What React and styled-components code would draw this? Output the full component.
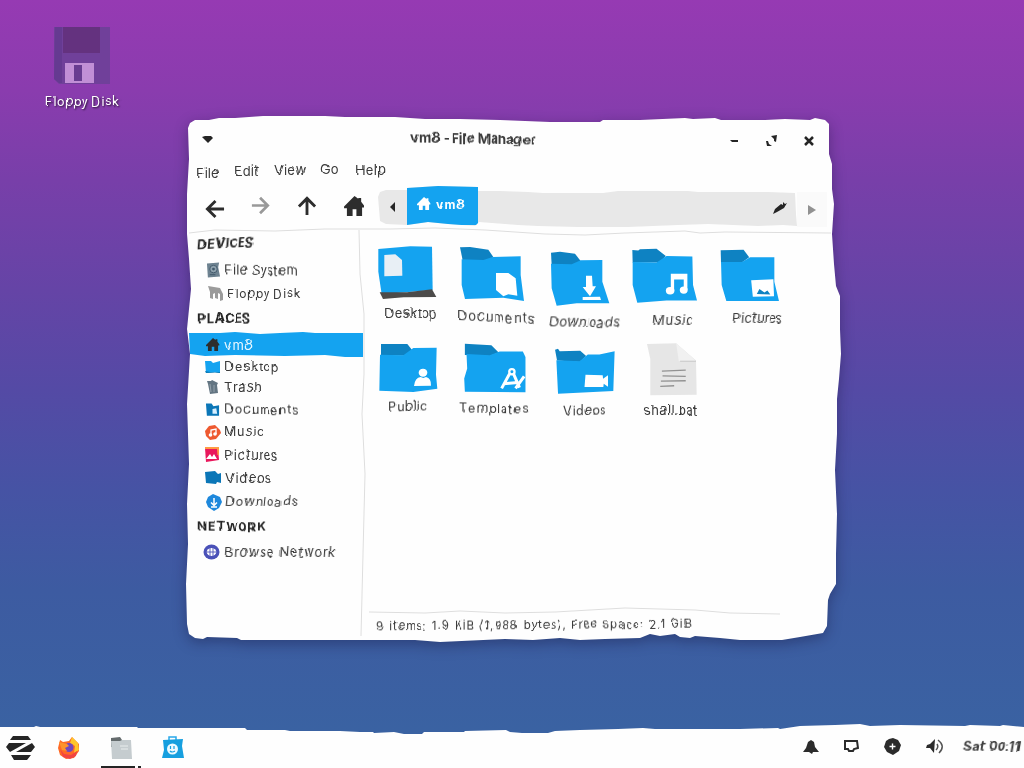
import React from 'react'
import styled, { createGlobalStyle } from 'styled-components'

const GlobalStyle = createGlobalStyle`
  * {
    box-sizing: border-box;
  }

  body {
    margin: 0;
    overflow: hidden;
    font-family: Inter, 'Open Sans', sans-serif;
    font-size: 13px;
    color: #3a3a3a;
  }

  svg {
    display: block;
    flex: none;
  }
`

const Screen = styled.div`
  position: relative;
  display: flex;
  flex-direction: column;
  justify-content: space-between;
  width: 1024px;
  height: 768px;
  overflow: hidden;
  background: linear-gradient(#963ab3 0, #8a3cae 90px, #783fa9 180px, #6544a6 290px, #544aa5 390px, #4653a4 490px, #3d5ba1 590px, #3a62a2 730px);
`

const DesktopIcon = styled.div`
  display: flex;
  flex-direction: column;
  align-items: center;
  width: 165px;
  padding-top: 26px;
  color: #fff;
  text-shadow: 1px 1px 2px rgba(0, 0, 0, 0.75);
`

// hand-cut text: every label has its own tracking and slope
const Ink = styled.span`
  display: inline-block;
  white-space: nowrap;
  line-height: 16px;
  font-size: ${p => p.$size || 13}px;
  font-weight: ${p => p.$weight || 400};
  letter-spacing: ${p => p.$track || 0}px;
  margin-top: ${p => p.$down || 0}px;
  margin-left: ${p => p.$left || 0}px;
  transform: skewY(${p => p.$slope || 0}deg) skewX(${p => p.$lean || 0}deg);
  filter: url(#rough);
`

const WindowShadow = styled.div`
  position: absolute;
  left: 185px;
  top: 114px;
  filter: drop-shadow(0 4px 7px rgba(15, 10, 50, 0.35));
`

const Window = styled.div`
  display: flex;
  flex-direction: column;
  width: 658px;
  height: 530px;
  background: #fefefe;
  clip-path: polygon(
    3px 14px, 5px 9px, 10px 6px, 24px 6px, 34px 4px, 50px 4px, 78px 2px, 140px 2px, 160px 3px, 210px 3px,
    240px 5px, 275px 5px, 315px 6px, 365px 8px, 415px 8px, 418px 6px, 455px 6px, 500px 4px, 508px 5px, 530px 4px,
    536px 6px, 580px 6px, 600px 5px, 625px 6px, 630px 4px, 640px 6px, 644px 10px, 644px 40px, 647px 50px, 647px 75px,
    649px 90px, 647px 120px, 649px 150px, 651px 172px, 655px 182px, 655px 215px, 656px 240px, 654px 265px, 652px 285px, 652px 320px,
    650px 356px, 651px 378px, 652px 400px, 651px 440px, 651px 470px, 645px 480px, 643px 486px, 642px 512px, 638px 519px, 615px 523px,
    597px 526px, 555px 526px, 535px 524px, 510px 522px, 505px 524px, 495px 523px, 490px 520px, 475px 522px, 465px 520px, 455px 524px,
    420px 525px, 395px 526px, 375px 524px, 348px 526px, 320px 525px, 255px 528px, 230px 526px, 56px 526px, 52px 524px, 22px 523px,
    18px 525px, 10px 524px, 4px 520px, 2px 510px, 1px 470px, 3px 430px, 2px 390px, 4px 350px, 2px 290px, 5px 240px,
    2px 215px, 6px 175px, 4px 145px, 2px 120px, 2px 80px, 4px 45px
  );
`

const TitleBar = styled.div`
  display: grid;
  grid-template-columns: 204px 1fr 112px;
  align-items: center;
  height: 48px;
  padding: 4px 17px 0 17px;
`

const Controls = styled.div`
  display: flex;
  justify-content: space-between;
  align-items: center;
  padding: 2px 12px 0 16px;
`

const MenuBar = styled.div`
  display: flex;
  align-items: flex-start;
  height: 22px;
  padding-left: 12px;
`

const MenuItem = styled(Ink)`
  width: ${p => p.$w}px;
`

const Toolbar = styled.div`
  display: flex;
  height: 46px;
  padding-left: 19px;
`

const ToolButton = styled.div`
  display: flex;
  justify-content: center;
  width: ${p => p.$w || 22}px;
  margin-right: ${p => p.$gap}px;
  padding-top: ${p => p.$down}px;
  color: ${p => (p.$off ? '#999' : '#2d2d2d')};
`

const PathBar = styled.div`
  display: flex;
  align-items: flex-start;
  justify-content: space-between;
  width: 419px;
  height: 43px;
  background: #e8e8e8;
  clip-path: polygon(
    0 13px, 2px 8px, 8px 6px, 29px 6px, 29px 4px, 60px 2px, 100px 3px, 100px 7px, 122px 7px, 150px 8px,
    165px 9px, 225px 9px, 240px 7px, 310px 7px, 320px 8px, 390px 8px, 417px 9px, 418px 30px, 419px 42px, 405px 41px,
    380px 42px, 330px 40px, 300px 41px, 250px 43px, 200px 43px, 160px 42px, 140px 41px, 101px 38px, 97px 42px, 70px 40px,
    50px 38px, 29px 41px, 8px 40px, 2px 37px
  );
`

const PathTab = styled.div`
  display: flex;
  gap: 6px;
  width: 71px;
  height: 41px;
  margin-right: auto;
  padding: 13px 0 0 10px;
  color: #fff;
  background: #14a3f0;
`

const PathArrow = styled.div`
  width: 29px;
  padding: 18px 0 0 11px;
`

const PathEdit = styled.div`
  padding: 18px 10px 0 0;
`

const PathNext = styled.div`
  width: 30px;
  height: 35px;
  margin-top: 8px;
  padding: 13px 0 0 11px;
  background: #fafafa;
`

const Body = styled.div`
  position: relative;
  display: grid;
  grid-template-columns: 176px 1fr;
  flex: 1;
`

const Seams = styled.svg`
  position: absolute;
  left: 0;
  top: -6px;
  pointer-events: none;
`

const Sidebar = styled.div`
  display: flex;
  flex-direction: column;
  padding-top: 2px;
`

const SideTitle = styled.div`
  display: flex;
  align-items: center;
  height: ${p => p.$h}px;
  padding-left: 13px;
  color: #252525;
`

const SideRow = styled.div`
  display: flex;
  align-items: center;
  gap: ${p => p.$gap || 5}px;
  height: ${p => p.$h}px;
  padding-left: ${p => p.$pad || 20}px;
  ${p => p.$active && `
    width: 178px;
    color: #e8f7ff;
    background: #14a3f0;
    clip-path: polygon(4px 1px, 35px 1px, 50px 0, 75px 2px, 95px 1px, 118px 0, 130px 1px, 178px 1px, 178px 25px, 160px 25px, 140px 23px, 100px 24px, 50px 23px, 20px 24px, 5px 22px);
  `}
`

const Main = styled.div`
  display: flex;
  flex-direction: column;
`

const Files = styled.div`
  display: grid;
  grid-template-columns: repeat(5, 87px);
  grid-template-rows: 98px 90px;
  flex: 1;
  padding: 14px 0 0 4px;
`

const Tile = styled.div`
  display: flex;
  flex-direction: column;
  align-items: flex-start;
  padding-top: ${p => p.$y}px;
  padding-left: ${p => p.$x}px;
`

const StatusBar = styled.div`
  height: 36px;
  padding: 8px 0 0 16px;
`

const Taskbar = styled.div`
  display: flex;
  align-items: center;
  justify-content: space-between;
  height: 46px;
  padding: 5px 3px 0 6px;
  background: #fefefe;
  clip-path: polygon(
    0 5px, 34px 5px, 36px 4px, 40px 5px, 137px 5px, 138px 6px, 245px 6px, 247px 8px, 285px 8px, 290px 9px,
    340px 9px, 360px 10px, 373px 10px, 374px 11px, 394px 10px, 404px 12px, 422px 12px, 424px 10px, 464px 10px, 465px 9px,
    506px 8px, 510px 10px, 522px 11px, 548px 11px, 555px 9px, 580px 8px, 618px 7px, 643px 6px, 655px 7px, 740px 7px,
    778px 6px, 780px 7px, 800px 4px, 835px 3px, 860px 2px, 870px 4px, 900px 3px, 965px 4px, 970px 3px, 1000px 4px,
    1003px 3px, 1024px 5px, 1024px 46px, 0 46px
  );
`

const Launchers = styled.div`
  display: flex;
  align-items: center;
  gap: 23px;
`

const Running = styled.div`
  display: flex;
  flex-direction: column;
  align-items: center;
  justify-content: space-between;
  width: 42px;
  height: 41px;
  padding-top: 10px;
  margin: 0 -3px;
`

const RunningMark = styled.div`
  display: flex;
  gap: 3px;

  &::before,
  &::after {
    content: '';
    width: 34px;
    height: 2px;
    background: #252525;
  }

  &::after {
    width: 3px;
  }
`

const Tray = styled.div`
  display: flex;
  align-items: center;
  gap: 25px;
  padding-bottom: 2px;
`

const BLUE = '#14a3f0'
const DARK = '#0e82c2'

const HouseIcon = ({ size = 22, color = 'currentColor' }) => (
  <svg width={size} height={size * 0.95} viewBox="0 0 22 21" fill={color}>
    <path d="M11 0 15 3V2h3v4l3 4v2h-2v9h-6v-7H9v7H3v-8H0v-2z" />
  </svg>
)

const ArrowIcon = ({ turn = 0, size = 21 }) => (
  <svg width={size} height={size} viewBox="0 0 21 21" fill="none" stroke="currentColor" strokeWidth="3">
    <g transform={`rotate(${turn} 10.5 10.5)`}>
      <path d="M20 10.5H3M11 2 2.5 10.5 11 19" />
    </g>
  </svg>
)

const sideIcons = {
  disk: <svg width="15" height="16" viewBox="0 0 16 16"><path d="M1 1 14 0 13 5 15 15 2 16z" fill="#6d8290" /><circle cx="8" cy="7" r="4" fill="#8fa2ae" stroke="#40586a" /><circle cx="8" cy="7" r="1.5" fill="#40586a" /><path d="M4 13h6" stroke="#40586a" /></svg>,
  floppy: <svg width="16" height="15" viewBox="0 0 16 15"><path d="M0 0 12 2 15 8 15 14 12 15 12 8 10 7 10 13 7 12 7 7 5 8 5 13 2 12 2 6z" fill="#9b9b9b" /></svg>,
  home: <HouseIcon size={14} color="#2d2d2d" />,
  desktop: <svg width="15" height="14" viewBox="0 0 15 14"><path d="M0 1 6 1 8 3 15 1V13L10 12 1 13z" fill={BLUE} /><path d="M0 11 5 12 15 12V13L10 12.5 1 13z" fill="#087ab7" /></svg>,
  trash: <svg width="13" height="14" viewBox="0 0 13 14"><path d="M1 1 5 1 6 0 12 3 11 5 12 13 4 14 2 4z" fill="#637582" /><path d="M4 4 5 12M8 5V12" stroke="#93a1ab" /></svg>,
  documents: <svg width="15" height="14" viewBox="0 0 16 14"><path d="M1 0H7L9 3 15 2V13H2z" fill="#0b76b7" /><path d="M8 6 12 5 13 11H8z" fill="#d7efff" /></svg>,
  music: <svg width="16" height="15" viewBox="0 0 16 15"><path d="M4 1 10 0 15 5 16 8 11 14 5 15 1 11 0 6z" fill="#ee5930" /><path d="M6 10V5l5-1v5" fill="none" stroke="#fff" strokeWidth="1.3" /><circle cx="5.5" cy="10" r="1.8" fill="#fff" /><circle cx="10" cy="9" r="1.8" fill="#fff" /></svg>,
  pictures: <svg width="16" height="15" viewBox="0 0 16 15"><path d="M1 1 14 0 15 13 2 15z" fill="#e9185c" /><path d="M1 0 15 0 15 8 13.5 8 13 2 1 2z" fill="#ff9b43" /><path d="M2 12 6 7 8 10 10 7 13 12z" fill="#fff" /></svg>,
  videos: <svg width="17" height="14" viewBox="0 0 17 14"><path d="M0 1 10 0 13 3 16 2 16 12 12 11 11 13 1 12z" fill="#0b76b7" /></svg>,
  downloads: <svg width="16" height="17" viewBox="0 0 16 17"><path d="M7 0 14 3 16 8 13 14 8 17 2 13 0 8 2 3z" fill="#1e88dc" /><path d="M8 4V11M5 8.5 8 11.5 11 8.5M5 13H11" fill="none" stroke="#fff" strokeWidth="1.5" /></svg>,
  network: <svg width="17" height="16" viewBox="0 0 17 16"><ellipse cx="8.5" cy="8" rx="8" ry="7.5" fill="#4a51b8" /><ellipse cx="8.5" cy="8" rx="4.8" ry="4" fill="#fff" /><path d="M7 4V12M10 4V12M3.5 8H13.5" stroke="#4a51b8" strokeWidth="0.9" /></svg>,
}

const devices = [
  { icon: 'disk', name: 'File System', h: 27, pad: 21, gap: 4, ink: { $track: 0.2, $slope: 1 } },
  { icon: 'floppy', name: 'Floppy Disk', h: 21, pad: 23, gap: 4, ink: { $track: 0.6, $size: 12 } },
]

const places = [
  { icon: 'home', name: 'vm8', h: 25, active: true, pad: 21, ink: { $track: 0.1 } },
  { icon: 'desktop', name: 'Desktop', h: 19, ink: { $track: 0.9, $size: 12.5 } },
  { icon: 'trash', name: 'Trash', h: 22, pad: 21, gap: 6, ink: { $track: 0.4 } },
  { icon: 'documents', name: 'Documents', h: 23, ink: { $track: 0.8, $size: 12.5, $slope: 1 } },
  { icon: 'music', name: 'Music', h: 22, gap: 4, ink: { $track: 0.7, $size: 12.5 } },
  { icon: 'pictures', name: 'Pictures', h: 23, pad: 19, ink: { $track: 0.5 } },
  { icon: 'videos', name: 'Videos', h: 23, gap: 4, ink: { $track: 0.6 } },
  { icon: 'downloads', name: 'Downloads', h: 26, pad: 21, gap: 4, ink: { $track: 0.8, $size: 12.5, $lean: -6 } },
]

const Shape = ({ box, w, h, tab, body, children }) => (
  <svg width={w} height={h} viewBox={box} fill="#fff">
    <path d={tab} fill={DARK} />
    <path d={body} fill={BLUE} />
    {children}
  </svg>
)

const files = [
  {
    name: 'Desktop', x: 12, y: 1, label: { $left: 8, $down: 5, $track: 0.25 },
    art: <svg width="60" height="55" viewBox="20 30 180 165"><path d="M24 42 120 34 185 35 187 165 34 178 24 110z" fill={BLUE} /><path d="M28 172 110 172 185 163 198 186 100 187 38 192z" fill="#4c4b4a" /><path d="M42 60 75 58 95 75 96 122 42 124z" fill="#e8eff5" /></svg>,
  },
  {
    name: 'Documents', x: 8, y: 2, label: { $left: -2, $down: 7, $track: 0.8, $slope: 3 },
    art: <Shape w={65} h={56} box="270 33 195 168" tab="M270 37 300 36 355 44 370 66 350 78 278 76z" body="M275 73 340 75 368 66 452 64 452 120 462 198 400 188 285 192 275 150z"><path d="M378 114 415 114 437 130 442 182 415 178 400 184 378 165z" /></Shape>,
  },
  {
    name: 'Downloads', x: 11, y: 7, label: { $left: 0, $down: 7, $track: 0.2, $slope: 1, $lean: -8 },
    art: <Shape w={60} h={56} box="540 48 180 168" tab="M543 53 570 50 615 56 632 78 610 90 545 90z" body="M543 86 605 88 632 76 697 75 697 140 718 205 620 205 560 212 545 160z"><path d="M648 122h18l2 32h10l-18 30-22-28h10zM638 186l52-1 3 10h-55z" /></Shape>,
  },
  {
    name: 'Music', x: 5, y: 3, label: { $left: 22, $down: 8, $track: 0.7, $lean: -5 },
    art: <Shape w={67} h={57} box="93 36 202 170" tab="M97 44 115 46 120 42 170 40 198 62 180 82 98 82z" body="M98 80 170 82 200 62 278 64 280 150 292 196 200 196 112 203 98 150z"><path d="M213 116h50v48h-11v-31h-29v36h-10z" /><ellipse cx="211" cy="167" rx="13" ry="11" /><ellipse cx="252" cy="165" rx="12" ry="11" /></Shape>,
  },
  {
    name: 'Pictures', x: 6, y: 4, label: { $left: 14, $down: 7, $track: 0, $lean: -5 },
    art: <Shape w={62} h={55} box="357 38 185 166" tab="M361 45 430 43 447 66 425 82 362 82z" body="M362 80 425 80 450 66 523 66 523 140 537 198 378 198 364 150z"><path d="M453 135 520 132 522 184 458 185z" /><path d="M470 177 478 162 493 172 502 166 511 178z" fill={DARK} /></Shape>,
  },
  {
    name: 'Public', x: 14, y: 0, label: { $left: 10, $down: 6, $track: 0.2, $slope: -2, $size: 12.5 },
    art: <Shape w={59} h={51} box="27 322 177 153" tab="M33 328 112 328 128 348 105 363 33 362z" body="M30 360 100 362 130 340 200 339 198 420 202 462 130 472 28 468z"><ellipse cx="159" cy="414" rx="13" ry="12" /><path d="M132 454q3-26 20-27l8 3 8-3q16 3 15 26z" /></Shape>,
  },
  {
    name: 'Templates', x: 11, y: 0, label: { $left: -3, $down: 7, $track: 1, $size: 12.5, $slope: 1 },
    art: <Shape w={65} h={52} box="280 320 195 157" tab="M285 325 365 330 387 352 360 362 285 359z" body="M290 356 360 360 390 349 460 349 468 365 468 472 285 470 283 430 292 400z"><path d="M420 416 396 460M432 416 450 458M402 446 445 442M464 424 438 460" stroke="#fff" strokeWidth="9" fill="none" /><circle cx="427" cy="410" r="8" fill="none" stroke="#fff" strokeWidth="7" /></Shape>,
  },
  {
    name: 'Videos', x: 15, y: 6, label: { $left: 10, $down: 8, $track: 0.2, $size: 12.5, $slope: -2 },
    art: <Shape w={63} h={47} box="553 340 190 142" tab="M556 345 565 342 570 350 632 348 650 364 630 382 562 378z" body="M560 377 630 380 655 360 690 360 736 350 732 470 565 478z"><path d="M648 421 700 422 701 433 716 422V457L703 448 702 458 645 458z" /></Shape>,
  },
  {
    name: 'shall.bat', x: 20, y: 0, label: { $left: -2, $down: 5, $track: 0.35 },
    art: <svg width="53" height="55" viewBox="137 320 160 164"><path d="M140 325 228 323 288 375 290 478 150 480 150 370z" fill="#e6e6e6" /><path d="M228 323 236 376 288 376z" fill="#f1f1f1" /><path d="M240 377H288" stroke="#c7c7c7" strokeWidth="3" /><path d="M185 407 257 404M187 421 257 423M182 437 257 436M180 453 222 451" stroke="#929292" strokeWidth="4" /></svg>,
  },
]

const menus = [
  ['File', 38, 7, 0],
  ['Edit', 40, 5, 0],
  ['View', 46, 4, 0.1],
  ['Go', 35, 3, 0],
  ['Help', 40, 4, 0.2],
]

const SideItem = ({ item }) => (
  <SideRow $h={item.h} $active={item.active} $pad={item.pad} $gap={item.gap}>
    {sideIcons[item.icon]}
    <Ink {...item.ink}>{item.name}</Ink>
  </SideRow>
)

const FileManager = () => (
  <WindowShadow>
    <Window>
      <TitleBar>
        <svg width="12" height="8" viewBox="0 0 12 8"><path d="M0 1 3 0 9 0 11 2 6 7z" fill="#252525" /></svg>
        <Ink $size={13.5} $weight={700} $track={-0.15} $left={5} $slope={1}>vm8 - File Manager</Ink>
        <Controls>
          <svg width="9" height="4" viewBox="0 0 9 4"><path d="M0 1 8 1V3H2z" fill="#252525" /></svg>
          <svg width="11" height="12" viewBox="0 0 11 12" fill="#252525"><path d="M5 1 11 0 10 7 8 6 8 4zM0 6 2 6 3 9 6 11 1 11z" /></svg>
          <svg width="10" height="10" viewBox="0 0 10 10" stroke="#252525" strokeWidth="2.5"><path d="M1 1 9 9M9 1 1 9" /></svg>
        </Controls>
      </TitleBar>

      <MenuBar>
        {menus.map(([name, w, down, track]) => (
          <MenuItem key={name} $w={w} $down={down - 4} $track={track}>{name}</MenuItem>
        ))}
      </MenuBar>

      <Toolbar>
        <ToolButton $down={15} $gap={23}><ArrowIcon size={20} /></ToolButton>
        <ToolButton $down={12} $gap={25} $off><ArrowIcon turn={180} size={19} /></ToolButton>
        <ToolButton $down={12} $gap={25}><ArrowIcon turn={90} size={20} /></ToolButton>
        <ToolButton $down={12} $gap={13}><HouseIcon size={21} /></ToolButton>
        <PathBar>
          <PathArrow><svg width="7" height="10" viewBox="0 0 7 10"><path d="M6 0V10L1 5z" fill="#252525" /></svg></PathArrow>
          <PathTab>
            <HouseIcon size={14} />
            <Ink $weight={700} $size={12} $track={0.4}>vm8</Ink>
          </PathTab>
          <PathEdit><svg width="14" height="13" viewBox="0 0 14 13"><path d="M0 12 2 7 8 2 10 3 10 0 12 2 14 1 11 6 4 10z" fill="#252525" /></svg></PathEdit>
        </PathBar>
        <PathNext><svg width="8" height="10" viewBox="0 0 8 10"><path d="M0 0 8 5 0 10z" fill="#919191" /></svg></PathNext>
      </Toolbar>

      <Body>
        <Sidebar>
          <SideTitle $h={24}><Ink $weight={700} $size={12.5} $track={0.25} $slope={-3} $lean={-5}>DEVICES</Ink></SideTitle>
          {devices.map(d => <SideItem key={d.name} item={d} />)}
          <SideTitle $h={28}><Ink $weight={700} $size={13} $track={0.4} $slope={-1}>PLACES</Ink></SideTitle>
          {places.map(d => <SideItem key={d.name} item={d} />)}
          <SideTitle $h={24}><Ink $weight={700} $size={12} $track={0.9} $slope={1}>NETWORK</Ink></SideTitle>
          <SideItem item={{ icon: 'network', name: 'Browse Network', h: 25, pad: 18, gap: 5, ink: { $track: 0.7, $lean: -4 } }} />
        </Sidebar>
        <Main>
          <Files>
            {files.map(f => (
              <Tile key={f.name} $x={f.x} $y={f.y}>
                {f.art}
                <Ink {...f.label}>{f.name}</Ink>
              </Tile>
            ))}
          </Files>
          <StatusBar>
            <Ink $size={11.5} $track={0.96} $slope={-0.5}>9 items: 1.9 KiB (1,988 bytes), Free space: 2.1 GiB</Ink>
          </StatusBar>
        </Main>
        <Seams width="658" height="420" viewBox="0 0 658 420" fill="none" stroke="#dedede">
          <path d="M4 9 30 6 90 7 140 5 205 5 250 4 300 6 360 10 400 11 440 9 500 7 515 9 540 8 646 9" />
          <path d="M174 6 175 50 179 90 179 150 177 190 180 250 178 330 176 412" />
          <path d="M184 388 240 389 275 387 320 389 370 388 440 384 510 386 545 389 595 390" />
        </Seams>
      </Body>
    </Window>
  </WindowShadow>
)

const App = () => (
  <Screen>
    <GlobalStyle />
    <svg width="0" height="0" style={{ position: 'absolute' }}>
      <filter id="rough" x="-5%" y="-20%" width="110%" height="140%">
        <feTurbulence type="fractalNoise" baseFrequency="0.07" numOctaves="1" seed="4" />
        <feDisplacementMap in="SourceGraphic" scale="5" xChannelSelector="R" yChannelSelector="G" />
      </filter>
    </svg>

    <DesktopIcon>
      <svg width="57" height="59" viewBox="0 0 57 59">
        <path d="M0 1H56V58H5L0 53z" fill="#70409a" />
        <path d="M1 1H8V57H5L0 53z" fill="#653a91" />
        <path d="M9 1H46V27H9z" fill="#64327f" />
        <path d="M11 37H40V57H11z" fill="#c18fd6" />
        <path d="M20 39H28V55H20z" fill="#683c91" />
      </svg>
      <Ink $size={12.5} $down={9} $track={0.4}>Floppy Disk</Ink>
    </DesktopIcon>

    <FileManager />

    <Taskbar>
      <Launchers>
        <svg width="29" height="25" viewBox="0 0 29 25" fill="#252525">
          <path d="M7 1H22L25 5H4zM3 8H20L4 17 0 12zM26 8 29 12 25 17H10zM5 20H25L21 25H8z" />
        </svg>
        <svg width="22" height="22" viewBox="0 0 22 22">
          <path d="M2 3 5 5 11 4 14 0 21 7 21 14 16 21 8 22 2 18 0 11z" fill="#ff6a25" />
          <path d="M14 0 20 6 21 13 16 16 17 9 12 6z" fill="#ffc62b" />
          <path d="M2 12 6 17 13 18 19 14 18 19 12 22 5 20z" fill="#f14443" />
          <circle cx="11" cy="10.5" r="4.5" fill="#7248bd" />
          <path d="M1 5 9 7 11 9 7 11 9 14 4 13z" fill="#ff932a" />
        </svg>
        <Running>
          <svg width="21" height="22" viewBox="0 0 21 22">
            <path d="M0 1 9 0 11 3 20 3V10H0z" fill="#646b6d" />
            <path d="M0 4H9L11 3H20L21 22H1z" fill="#c5cccf" />
            <path d="M9 9H17M10 12H17" stroke="#e9eded" />
          </svg>
          <RunningMark />
        </Running>
        <svg width="22" height="23" viewBox="0 0 22 23">
          <path d="M7 5V1H14V5" fill="none" stroke="#28a8ea" strokeWidth="1.5" />
          <path d="M1 4 21 3 20 10 22 22 0 22 2 14z" fill="#169fdf" />
          <circle cx="10.5" cy="13" r="5.5" fill="#edfaff" />
          <path d="M8.5 10V13M12 10V13M8 15Q10 17 13 15" fill="none" stroke="#169fdf" strokeWidth="1.2" />
        </svg>
      </Launchers>
      <Tray>
        <svg width="16" height="14" viewBox="0 0 16 14" fill="#2b2b2b"><path d="M5 2 8 0 11 2 12 7 16 12 10 12 9 14 6 12 0 12 3 8z" /></svg>
        <svg width="15" height="13" viewBox="0 0 15 13" fill="none" stroke="#2b2b2b" strokeWidth="2"><path d="M1 1 13 1 14 8 10 9 9 11 5 11 4 9 1 9z" /></svg>
        <svg width="17" height="17" viewBox="0 0 17 17"><path d="M5 1 9 0 14 2 17 7 15 13 9 17 3 14 0 9 2 3z" fill="#2b2b2b" /><path d="M8.5 5.5V11.5M5.5 8.5H11.5" stroke="#fff" strokeWidth="1.4" /></svg>
        <svg width="18" height="15" viewBox="0 0 18 15"><path d="M1 6 4 5 9 0 8 14 4 9 0 9z" fill="#2b2b2b" /><path d="M11 5Q13 8 10 11M12 1Q20 7 13 14" fill="none" stroke="#555" strokeWidth="1.5" /></svg>
        <Ink $weight={700} $size={12.5} $track={0.25} $lean={-10} $left={-5} $slope={0.5}>Sat 00:11</Ink>
      </Tray>
    </Taskbar>
  </Screen>
)

export default App
